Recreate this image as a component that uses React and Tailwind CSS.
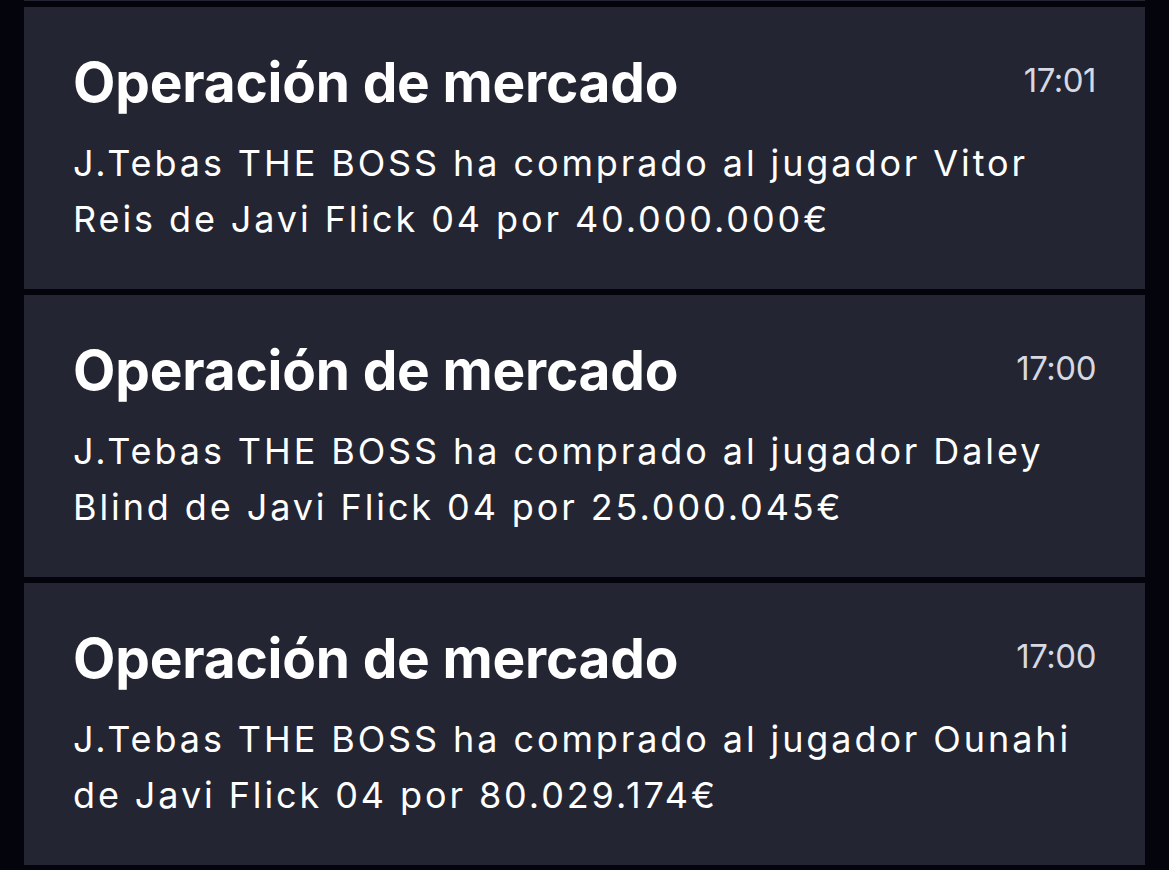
import React from "react"

const items = [
  { time: "17:01", text: "J.Tebas THE BOSS ha comprado al jugador Vitor Reis de Javi Flick 04 por 40.000.000€" },
  { time: "17:00", text: "J.Tebas THE BOSS ha comprado al jugador Daley Blind de Javi Flick 04 por 25.000.045€" },
  { time: "17:00", text: "J.Tebas THE BOSS ha comprado al jugador Ounahi de Javi Flick 04 por 80.029.174€" },
]

export default function App() {
  return (
    <div className="min-h-screen bg-[#04040c] flex flex-col gap-[6px] px-[24px] pb-[5px]" style={{ fontFamily: "Inter, 'Noto Sans', sans-serif" }}>
      <div className="h-[1px] bg-[#232532]" />
      {items.map((item, i) => (
        <div key={i} className="h-[282px] bg-[#232532] px-[49px] pt-[42px]">
          <div className="flex justify-between items-start">
            <h2 className="text-[55px] leading-[66px] font-bold text-white tracking-[-0.2px]">Operación de mercado</h2>
            <span className="text-[33px] leading-[40px] text-[#d6d8e2] pt-[11px] tracking-[-0.5px]">{item.time}</span>
          </div>
          <p className="mt-[20px] text-[36px] leading-[56px] text-white tracking-[2.9px]">{item.text}</p>
        </div>
      ))}
    </div>
  )
}
